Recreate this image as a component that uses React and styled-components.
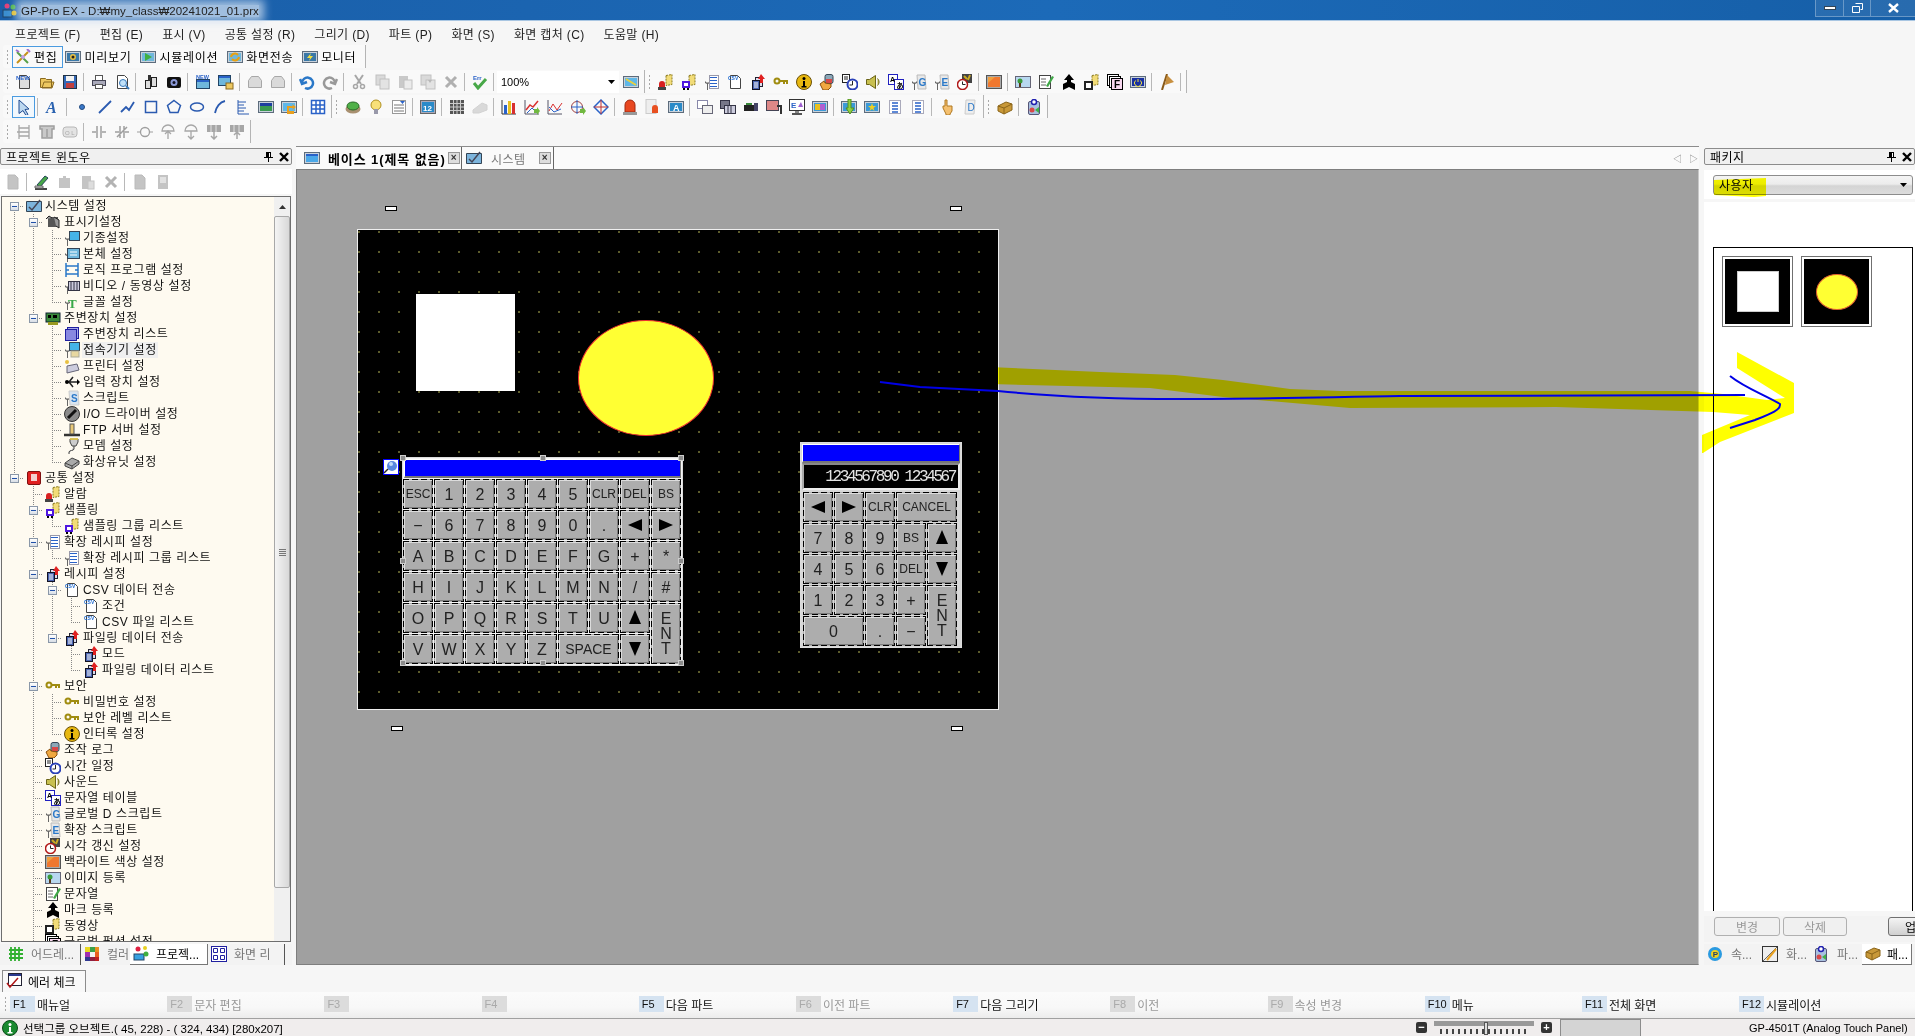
import React from "react";
import styled, { createGlobalStyle, css } from "styled-components";

const KR = `"Liberation Sans", "Noto Sans CJK KR", sans-serif`;

const GlobalStyle = createGlobalStyle`
  html, body { margin: 0; padding: 0; background: #f5f5f5; overflow: hidden; }
  body { font-family: ${KR}; font-size: 12px; color: #000; }
`;

const Page = styled.div`
  position: relative;
  width: 1915px;
  height: 1036px;
  display: flex;
  flex-direction: column;
  overflow: hidden;
  background: #f6f6f6;
`;

/* ---------- icons ---------- */

const Svg = styled.svg`
  width: ${(p) => p.$size || 16}px;
  height: ${(p) => p.$size || 16}px;
  flex: none;
  display: block;
  ${(p) => p.$off && css`filter: grayscale(1) opacity(0.5);`}
`;

const win = (fill, extra) => (
  <>
    <rect x=".5" y="2.5" width="15" height="11" fill="#c9d2dc" stroke="#5d6c7c" />
    <rect x="2" y="4" width="12" height="8" fill={fill} />
    {extra}
  </>
);
const wrench = <path d="M1 7v2l2 1v6h1v-6l2-1V7L4.500 8.500h-2z" fill="#666" />;
const doc = (fill = "#fff") => <path d="M3.500 1.500h7l3 3v10h-10z" fill={fill} stroke="#444" />;
const bld = <path d="M8 1.500l6-1v10l-6 1z" fill="#f2dc78" stroke="#8a7a20" strokeDasharray="2 1" />;
const lines = (
  <g stroke="#2a62c8">
    <path d="M6 3.500h7M6 6.500h7M6 9.500h7M6 12.500h7" />
  </g>
);
const key = (
  <>
    <circle cx="4" cy="7" r="2.500" fill="none" stroke="#a08c10" strokeWidth="2" />
    <path d="M6 7h9M11 7v3M14 7v3" stroke="#a08c10" strokeWidth="2" fill="none" />
  </>
);
const redDocs = (
  <>
    <rect x="5.500" y="3.500" width="7" height="9" fill="#dde" stroke="#223" />
    <rect x="2.500" y="6.500" width="7" height="9" fill="#4a64b0" stroke="#112" />
    <path d="M4 9h4M4 11h4M4 13h4" stroke="#fff" />
    <path d="M11 0l4 5h-2v4h-3V5H8z" fill="#e02020" />
  </>
);
const csv = (
  <>
    {doc()}
    <text x="1" y="6" fontSize="5" fontWeight="700" fill="#1e6ad0" fontFamily="Liberation Sans">CSV</text>
  </>
);
const tri = (d) => <path d={d} fill="#000" />;

const ICONS = {
  logo: <><rect x="1" y="8" width="9" height="7" fill="#3b8ed0" stroke="#246" /><circle cx="5" cy="4" r="2.500" fill="#e0427a" /><circle cx="11" cy="5" r="2.500" fill="#4cb548" /><circle cx="12" cy="11" r="2.500" fill="#e8c020" /></>,
  edit: <><path d="M2 14L13 3" stroke="#c49018" strokeWidth="2" /><path d="M2 3l11 11" stroke="#58a048" strokeWidth="2" /><path d="M1 1l3 2 M12 0l3 3" stroke="#a070d0" strokeWidth="2" /><circle cx="8" cy="8" r="2" fill="#c0a0e8" /></>,
  preview: win("#3a78a8", <><circle cx="8" cy="8" r="3" fill="#e8c040" /><circle cx="8" cy="8" r="1.500" fill="#222" /></>),
  sim: win("#6fb7dc", <path d="M5 4l7 4-7 4z" fill="#40b040" />),
  send: win("#6fb7dc", <path d="M4 8a4 4 0 017-2M12 8a4 4 0 01-7 2" stroke="#e8a010" strokeWidth="2" fill="none" />),
  moni: win("#3a78a8", <path d="M9 4L5 9h3l-1 3 4-5H8z" fill="#f0e040" />),
  new: <>{doc("#ddd")}<text x="0" y="6" fontSize="6" fontWeight="700" fill="#2a62c8" fontFamily="Liberation Sans">NEW</text></>,
  open: <path d="M1.500 4.500h5l1 1h5v8h-11zM3 14l2-6h10l-2 6z" fill="#edc860" stroke="#8a6a20" />,
  save: <><rect x="1.500" y="1.500" width="13" height="13" fill="#3468b8" stroke="#234" /><rect x="4" y="2" width="8" height="5" fill="#f4f4f4" /><rect x="4" y="9" width="8" height="5" fill="#c04040" /></>,
  print: <><rect x="4.500" y="1.500" width="7" height="5" fill="#fff" stroke="#555" /><rect x="1.500" y="6.500" width="13" height="5" fill="#aab" stroke="#445" /><rect x="4.500" y="10.500" width="7" height="4" fill="#fff" stroke="#555" /></>,
  find: <>{doc()}<circle cx="9" cy="9" r="3.500" fill="#bfe0f8" stroke="#3878b8" /><path d="M12 12l3 3" stroke="#3878b8" strokeWidth="2" /></>,
  binoc: <><rect x="2.500" y="6.500" width="5" height="8" fill="#ddd" stroke="#222" /><rect x="8.500" y="3.500" width="5" height="9" fill="#ddd" stroke="#222" /><rect x="5" y="1" width="3" height="6" fill="#333" /></>,
  camera: <><rect x="1" y="3" width="14" height="11" rx="2" fill="#111" /><circle cx="8" cy="8.500" r="3.500" fill="#8c9ad8" /><circle cx="8" cy="8.500" r="1.500" fill="#112" /></>,
  newscr: <><rect x="1.500" y="5.500" width="13" height="9" fill="#6fb7dc" stroke="#246" /><rect x="2" y="6" width="12" height="2" fill="#2a62c8" /><text x="1" y="5" fontSize="5.500" fontWeight="700" fill="#2a62c8" fontFamily="Liberation Sans">NEW</text></>,
  scrcopy: <><rect x=".5" y="1.500" width="12" height="10" fill="#6fb7dc" stroke="#246" /><rect x="1" y="2" width="11" height="2" fill="#2a62c8" /><rect x="8" y="9" width="7" height="6" fill="#edc860" stroke="#8a6a20" /></>,
  scrA: <path d="M1.500 6.500l3-4h7l3 4v7h-13z" fill="#bbb" stroke="#555" />,
  undo: <path d="M3 9a5.500 5.500 0 1 1 3 5M1 5l2 5 5-2" stroke="#2a78c8" strokeWidth="2.500" fill="none" />,
  redo: <path d="M13 9a5.500 5.500 0 1 0-3 5M15 5l-2 5-5-2" stroke="#999" strokeWidth="2.500" fill="none" />,
  cut: <><path d="M4 1l6 9M12 1L6 10" stroke="#555" strokeWidth="2" /><circle cx="4.500" cy="12.500" r="2" fill="none" stroke="#555" strokeWidth="1.500" /><circle cx="11.500" cy="12.500" r="2" fill="none" stroke="#555" strokeWidth="1.500" /></>,
  copy: <><rect x="2" y="1" width="9" height="10" fill="#bbb" stroke="#888" /><rect x="6" y="5" width="9" height="10" fill="#ccc" stroke="#888" /></>,
  paste: <><rect x="2" y="2" width="9" height="12" fill="#999" /><rect x="7" y="6" width="8" height="9" fill="#ddd" stroke="#888" /></>,
  paste2: <><rect x="1" y="1" width="10" height="10" fill="#bbb" stroke="#888" /><rect x="6" y="6" width="9" height="9" fill="#ccc" stroke="#888" /><path d="M8 6h4l-2 3z" fill="#777" /></>,
  del: <path d="M3 3l10 10M13 3L3 13" stroke="#666" strokeWidth="3" />,
  check: <><text x="1" y="5.500" fontSize="6" fontWeight="700" fill="#2a62c8" fontFamily="Liberation Sans">Err</text><path d="M2 9l4 5 8-9" stroke="#48a848" strokeWidth="3" fill="none" /></>,
  tone: win("#5fb7e8", <path d="M3 5l10 6" stroke="#e8d040" strokeWidth="2" />),
  basewin: win("#4aa8e8", <rect x="2" y="4" width="12" height="2" fill="#2a62c8" />),
  alarm: <>{bld}<path d="M1 14v-4a3 3 0 016 0v4z" fill="#d82020" /><rect x="0" y="13" width="8" height="3" fill="#444" /></>,
  samp: <>{bld}<rect x="1" y="7" width="8" height="7" fill="#5018e0" /><rect x="3" y="9" width="4" height="3" fill="#fff" /><rect x="2" y="14" width="2" height="2" /><rect x="6" y="14" width="2" height="2" /></>,
  rlist: <>{wrench}<rect x="5.500" y="1.500" width="9" height="13" fill="#fff" stroke="#99a" />{lines}</>,
  csv,
  docs: redDocs,
  key,
  info: <><circle cx="8" cy="8" r="7.500" fill="#e8b810" stroke="#6a5008" /><circle cx="8" cy="4.500" r="1.500" fill="#000" /><path d="M7 7h2v5h1.500v1.500h-5V12H7z" fill="#000" /></>,
  hand: <><rect x="6" y="0.500" width="8" height="9" rx="2" fill="#8ca8b8" stroke="#345" /><rect x="7" y="5" width="6" height="4" fill="#d84848" /><path d="M1 10l4-3 1 2 6 1v3l-3 3H4z" fill="#f0a840" stroke="#8a5010" /></>,
  clock: <><rect x="0.500" y="0.500" width="7" height="8" fill="#fff" stroke="#222" /><path d="M2 3h4M2 5h4" stroke="#222" /><circle cx="10.500" cy="10.500" r="5" fill="#fff" stroke="#2a40b8" strokeWidth="2" /><path d="M10.500 7v4h-3" stroke="#222" fill="none" /></>,
  sound: <path d="M1.500 5.500h3l6-4v13l-6-4h-3zM12.500 4.500c2 2 2 5 0 7" fill="#c8c050" stroke="#6a6418" />,
  abtable: <><rect x="0.500" y="0.500" width="9" height="10" fill="#fff" stroke="#2020c0" /><rect x="6.500" y="5.500" width="9" height="10" fill="#fff" stroke="#2020c0" /><text x="2" y="8" fontSize="7" fontWeight="700" fontFamily="Liberation Sans">A</text><text x="8.500" y="14" fontSize="7" fontWeight="700" fontFamily="Noto Sans CJK JP">あ</text></>,
  gs: <>{wrench}<path d="M6 1h8l1 14H7z" fill="#e8e8e8" stroke="#bbb" /><text x="7.500" y="12" fontSize="10" fill="#2a78c8" fontWeight="700" fontFamily="Liberation Sans">G</text></>,
  xs: <>{wrench}<path d="M6 1h8l1 14H7z" fill="#e8e8e8" stroke="#bbb" /><text x="7.500" y="12" fontSize="10" fill="#2a78c8" fontWeight="700" fontFamily="Liberation Sans">E</text></>,
  timer: <><rect x="5" y="0" width="10" height="9" fill="#444" /><path d="M7 2l3 3M13 1l-2 5" stroke="#ca2" strokeWidth="2" /><circle cx="5.500" cy="10.500" r="5" fill="#fff" stroke="#b01818" strokeWidth="1.500" /><path d="M5.500 7.500v3h3" stroke="#222" fill="none" /></>,
  back: <><rect x=".5" y="1.500" width="15" height="13" fill="#aaa" stroke="#555" /><rect x="2" y="3" width="12" height="10" fill="#f07830" /><path d="M2 3h7l-7 6z" fill="#f0a040" /></>,
  image: <><rect x=".5" y="2.500" width="15" height="11" fill="#b8d8f0" stroke="#667" /><circle cx="5" cy="7" r="2.500" fill="#3a9a3a" /><rect x="4" y="9" width="2" height="4" fill="#5a3a18" /></>,
  textpen: <><rect x="1.500" y="1.500" width="11" height="13" fill="#fff" stroke="#444" /><path d="M3 5h5M3 8h5M3 11h5" stroke="#666" /><path d="M8 12L14 2l2 1-6 10z" fill="#40a848" /></>,
  mark: <path d="M8 0l5 6h-3v2l4 2v6l-6-3-6 3v-6l4-2V6H3z" fill="#000" />,
  movie: <>{bld}<rect x="0" y="7" width="9" height="9" fill="#222" /><rect x="2" y="9" width="5" height="5" fill="#fff" /></>,
  fdoc: <><rect x=".5" y=".5" width="11" height="11" fill="#fff" stroke="#000" /><rect x="2.500" y="2.500" width="11" height="11" fill="#fff" stroke="#000" /><rect x="4.500" y="4.500" width="11" height="11" fill="#f8d8f0" stroke="#000" /><text x="7" y="14" fontSize="10" fontWeight="700" fontFamily="Liberation Sans">F</text></>,
  power: win("#1830a0", <path d="M8 5v3M5.500 6.500a3.500 3.500 0 105 0" stroke="#f0e040" fill="none" />),
  flag: <><path d="M3 16L8 0" stroke="#8a5a18" strokeWidth="2" /><path d="M8 1l7 7-9 3z" fill="#c89040" /></>,
  pointer: <path d="M3 1l10 9-4 .5 3 5-2 1-3-5-4 3z" fill="#bcd8f0" stroke="#1f4a90" />,
  A: <text x="1" y="14" fontSize="16" fontWeight="700" fontStyle="italic" fontFamily="Liberation Serif" fill="#2a62b0">A</text>,
  dot: <circle cx="8" cy="8" r="2.500" fill="#3a78c8" stroke="#234a80" />,
  line: <path d="M2 14L14 2" stroke="#2a5ab0" strokeWidth="1.800" />,
  poly: <path d="M1 13l5-5 3 3 5-8" stroke="#2a5ab0" strokeWidth="1.800" fill="none" />,
  rect: <rect x="2.500" y="2.500" width="11" height="11" fill="none" stroke="#2a5ab0" strokeWidth="1.500" />,
  penta: <path d="M8 1.500l6.500 5-2.500 7H4l-2.500-7z" fill="none" stroke="#2a5ab0" strokeWidth="1.500" />,
  ellipse: <ellipse cx="8" cy="8" rx="6.500" ry="4" fill="none" stroke="#2a5ab0" strokeWidth="1.500" />,
  arc: <path d="M3 14C4 8 8 3 13 2" fill="none" stroke="#2a5ab0" strokeWidth="1.800" />,
  scale: <path d="M3 1v14h11M3 3h8M3 6h6M3 9h8M3 12h6" fill="none" stroke="#2a5ab0" />,
  img: win("#3a9a50", <rect x="2" y="4" width="12" height="3" fill="#1f3fa0" />),
  img2: win("#5fb7e8", <path d="M15 8l-4 3 1-2H8v3h5v3H6V7h6l-1-2z" fill="#e8a020" />),
  table: <><rect x="1.500" y="1.500" width="13" height="13" fill="#fff" stroke="#2a62c8" strokeWidth="1.500" /><path d="M1.500 6h13M1.500 10h13M6 1.500v13M10 1.500v13" stroke="#2a62c8" strokeWidth="1.500" /></>,
  button: <><ellipse cx="8" cy="10" rx="7.500" ry="4.500" fill="#a89070" /><ellipse cx="8" cy="7" rx="6" ry="4" fill="#50b048" stroke="#2a6a28" /></>,
  bulb: <><circle cx="8" cy="6" r="5" fill="#f8e078" stroke="#b09020" /><rect x="6" y="10" width="4" height="5" fill="#99a" /></>,
  listdoc: <><rect x="1.500" y="1.500" width="13" height="13" fill="#fff" stroke="#999" /><path d="M3 6h10M3 9h10M3 12h10" stroke="#777" /><path d="M9 2h5l-2.500 3z" fill="#2a62c8" /></>,
  num: <><rect x=".5" y="1.500" width="15" height="13" fill="#aab" stroke="#666" /><rect x="2" y="3" width="12" height="10" fill="#2a8ac8" /><text x="3" y="11.500" fontSize="8" fontWeight="700" fill="#fff" fontFamily="Liberation Sans">12</text></>,
  grid: <><rect x="1" y="1" width="14" height="14" fill="#555" /><path d="M4.500 1v14M8 1v14M11.500 1v14M1 4.500h14M1 8h14M1 11.500h14" stroke="#ccc" /></>,
  erase: <path d="M1 11l9-7 5 2v5l-8 3H1z" fill="#c8b8a0" stroke="#aaa" />,
  bars: <><path d="M1 1v14h14" stroke="#333" fill="none" /><rect x="3" y="6" width="3" height="9" fill="#2a62c8" /><rect x="7" y="2" width="3" height="13" fill="#e8c020" /><rect x="11" y="4" width="3" height="11" fill="#d83030" /></>,
  chart1: <><path d="M1 1v14h14" stroke="#556" fill="none" /><path d="M2 11l4-5 3 2 5-6" stroke="#d83030" fill="none" strokeWidth="1.500" /><path d="M3 14l5-5 2 2" stroke="#2a62c8" fill="none" /><path d="M10 10h3V8l3 4-3 4v-2h-3z" fill="#70b840" /></>,
  chart2: <><path d="M1 1v14h14" stroke="#556" fill="none" /><path d="M2 12l4-7 4 6 5-7" stroke="#d83030" fill="none" /><path d="M2 8l5 5 7-3" stroke="#2a62c8" fill="none" /></>,
  polar: <><circle cx="7" cy="8" r="5.500" fill="none" stroke="#a04040" /><path d="M7 1v14M1 8h12" stroke="#2a62c8" /><path d="M10 10h3V8l3 4-3 4v-2h-3z" fill="#70b840" /></>,
  diamond: <><path d="M8 1l7 7-7 7-7-7z" fill="none" stroke="#2a62c8" strokeWidth="1.500" /><path d="M8 1v14M1 8h14" stroke="#c03030" /></>,
  lamp: <><path d="M3 13V6a5 5 0 0110 0v7z" fill="#e84820" stroke="#a02810" /><rect x="1" y="13" width="14" height="3" fill="#999" /></>,
  lamp2: <><rect x="1" y="0.500" width="10" height="14" fill="#eee" stroke="#ccc" /><path d="M7 14V9a3 3 0 016 0v5z" fill="#e85020" /></>,
  boxA: win("#2a8ac8", <text x="5" y="11.500" fontSize="9" fontWeight="700" fill="#fff" fontFamily="Liberation Sans">A</text>),
  stack: <><rect x=".5" y="1.500" width="10" height="8" fill="#fff" stroke="#88a" /><rect x="5.500" y="6.500" width="10" height="8" fill="#eee" stroke="#667" /></>,
  film: <><rect x=".5" y="1.500" width="9" height="8" fill="#778" stroke="#334" /><rect x="4.500" y="6.500" width="11" height="8" fill="#ccd" stroke="#334" /><path d="M8 7v7M11 7v7" stroke="#334" /></>,
  cam2: <><rect x="1" y="6" width="10" height="6" fill="#222" /><rect x="11" y="4" width="4" height="8" fill="#446" /><rect x="3" y="4" width="6" height="2" fill="#3a8a3a" /></>,
  proj: <><rect x=".5" y="1.500" width="12" height="10" fill="#d88" stroke="#445" /><path d="M11 7h4v8" stroke="#333" strokeWidth="2" fill="none" /></>,
  pc: <><rect x=".5" y=".5" width="15" height="11" fill="#fff" stroke="#333" /><text x="2" y="9" fontSize="8" fontWeight="700" fill="#2a62c8" fontFamily="Liberation Sans">E</text><path d="M9 8l3-5 2 5z" fill="#a060d0" /><rect x="6" y="12" width="4" height="2" fill="#888" /><rect x="3" y="14" width="10" height="2" fill="#555" /></>,
  multi: win("#3a9ad8", <><rect x="3" y="5" width="5" height="6" fill="#e8c020" /><rect x="8" y="5" width="5" height="6" fill="#b060d0" /></>),
  down: win("#3a9ad8", <path d="M7 0h3v9h3l-4 6-4-6h2z" fill="#90d040" stroke="#509020" />),
  star: win("#3a9ad8", <path d="M8 4l1 3h3l-2.500 2 1 3L8 10l-2.500 2 1-3L4 7h3z" fill="#f0d020" />),
  listA: <><rect x="2.500" y="1.500" width="11" height="13" fill="#fff" stroke="#aab" /><path d="M5 4h6M5 7h6M5 10h6M5 13h6" stroke="#2a62c8" strokeWidth="1.500" /></>,
  finger: <path d="M6 1h2v6h5v5l-2 3v1H7v-1L4 9V7h2z" fill="#f4c070" stroke="#b07820" />,
  scroll: <><path d="M4 1h9l-1 14H3z" fill="#eee" stroke="#ccc" /><text x="5.500" y="12" fontSize="10" fill="#2a78c8" fontFamily="Liberation Sans">D</text></>,
  pkg: <><path d="M1 7l8-4 6 2v6l-8 4-6-3z" fill="#c89838" stroke="#8a6418" /><path d="M1 7l6 2 8-4M7 9v6" stroke="#8a6418" fill="none" /></>,
  parts: <><rect x="2.500" y="2.500" width="11" height="13" rx="1.500" fill="#a8c0e0" stroke="#557" /><circle cx="8" cy="3" r="2.500" fill="#fff" stroke="#2020b0" strokeWidth="1.500" /><circle cx="6" cy="11" r="2.500" fill="#d84848" /><path d="M9 11l4-3v6z" fill="#40b048" /></>,
  lad: <path d="M3 1v14M13 1v14M3 4h10M3 8h10M3 12h10M1 8h4" stroke="#555" fill="none" strokeWidth="1.300" />,
  tee: <path d="M1 2h14v3h-2v9H3V5H1zM8 5v8" stroke="#444" strokeWidth="1.500" fill="#999" />,
  oval: <><rect x="1" y="3" width="14" height="10" rx="3" fill="#ccc" stroke="#777" /><text x="3" y="10.500" fontSize="6" fill="#555" fontFamily="Liberation Sans">O L</text></>,
  nc: <path d="M1 8h4M11 8h4M6 2v12M10 2v12" stroke="#444" strokeWidth="1.500" />,
  no: <path d="M1 8h4M11 8h4M6 2v12M10 2v12M3 13l10-10" stroke="#444" strokeWidth="1.500" />,
  circ: <><circle cx="8" cy="8" r="4.500" fill="none" stroke="#444" strokeWidth="1.300" /><path d="M0 8h3M13 8h3" stroke="#444" /></>,
  upg: <><path d="M2 7a6 6 0 0112 0z" fill="none" stroke="#555" strokeWidth="1.300" /><path d="M8 7v8M5 10l3-3 3 3" stroke="#555" strokeWidth="1.300" fill="none" /></>,
  dng: <><path d="M2 7a6 6 0 0112 0z" fill="none" stroke="#555" strokeWidth="1.300" /><path d="M8 7v8M5 12l3 3 3-3" stroke="#555" strokeWidth="1.300" fill="none" /></>,
  regd: <><rect x="1" y="1" width="14" height="7" fill="#555" /><path d="M5 1v7M10 1v7" stroke="#ccc" /><path d="M8 8v7M5 12l3 3 3-3" stroke="#555" strokeWidth="1.500" fill="none" /></>,
  regu: <><rect x="1" y="1" width="14" height="7" fill="#555" /><path d="M5 1v7M10 1v7" stroke="#ccc" /><path d="M8 8v7M5 11l3-3 3 3" stroke="#555" strokeWidth="1.500" fill="none" /></>,
  sys: <><path d="M.5 3.500h15v10H.5z" fill="#7cb4dc" stroke="#345" /><path d="M3 9l3 3 8-10" stroke="#445" strokeWidth="1.500" fill="none" /></>,
  dispset: <><rect x="3" y="3" width="10" height="10" fill="#555" /><path d="M1 5l3-3 3 2M9 3l5 3v8l-3-2" stroke="#222" fill="#999" /></>,
  wmodel: <>{wrench}<rect x="5.500" y="1.500" width="10" height="9" fill="#45b4e8" stroke="#345" /></>,
  wbody: <>{wrench}<rect x="3.500" y="2.500" width="12" height="10" fill="#6fb7dc" stroke="#345" /><path d="M6 6h7M6 9h7" stroke="#fff" /></>,
  logic: <path d="M2 1v14M14 1v14M2 4h12M2 8h3M11 8h3M2 12h12" stroke="#2a78c8" strokeWidth="1.500" fill="none" />,
  wvideo: <>{wrench}<rect x="4.500" y="3.500" width="11" height="9" fill="#ccd" stroke="#334" /><path d="M7 4v8M10 4v8M13 4v8" stroke="#334" /></>,
  wfont: <>{wrench}<text x="4" y="14" fontSize="13" fontWeight="700" fontFamily="Liberation Serif" fill="#38a848">T</text></>,
  periph: <><rect x="1" y="3" width="14" height="9" fill="#3a8a3a" stroke="#123" /><path d="M3 5h3v3H3zM8 5h4v3H8z" fill="#000" /><rect x="3" y="12" width="10" height="3" fill="#9a9a20" /></>,
  plist: <><rect x="3.500" y="1.500" width="11" height="11" fill="#a8a8e8" stroke="#2020a0" /><rect x="1.500" y="3.500" width="11" height="11" fill="#8888e0" stroke="#2020a0" /></>,
  wconn: <>{wrench}<rect x="5.500" y="0.500" width="10" height="8" fill="#45b4e8" stroke="#345" /><rect x="7" y="9" width="8" height="6" fill="#e8d8a0" stroke="#aa9" /></>,
  printer2: <><circle cx="3" cy="4" r="2" fill="#e8c040" /><path d="M3 8l10-2 2 6-12 3z" fill="#ccd" stroke="#667" /></>,
  usb: <><path d="M2 8h11M9 3l-4 5 4 5" stroke="#222" strokeWidth="1.500" fill="none" /><circle cx="3" cy="8" r="2" /><path d="M13 5l3 3-3 3z" /></>,
  wscript: <>{wrench}<path d="M5 1h9l1 14H6z" fill="#d8e4f0" stroke="#ccc" /><text x="7" y="12" fontSize="10" fontWeight="700" fill="#2a78c8" fontFamily="Liberation Sans">S</text></>,
  screw: <><circle cx="8" cy="8" r="7.500" fill="#8a8a8a" stroke="#333" /><path d="M4 12l8-8" stroke="#111" strokeWidth="3" /></>,
  ftp: <><path d="M0 13h16" stroke="#333" strokeWidth="2.500" /><rect x="6" y="2" width="4" height="10" fill="#e8c878" stroke="#555" /></>,
  modem: <><path d="M6 1h8v3l-2 4H8L6 4zM10 8v3c0 2-5 1-5 3v2" fill="#ccc" stroke="#444" /><path d="M6 1h8" stroke="#f0d040" strokeWidth="1.500" /></>,
  hdd: <><path d="M1 9l7-5 7 3v3l-7 5-7-3z" fill="#aaa" stroke="#444" /><path d="M1 9l7 3 7-5M8 12v3" stroke="#444" fill="none" /></>,
  common: <><rect x="1.500" y="1.500" width="13" height="13" rx="1.500" fill="#e02020" stroke="#801010" /><rect x="5" y="4" width="6" height="7" fill="#f4d0d0" /></>,
  addr: <path d="M3 1v14M7 1v14M11 1v14M1 4h14M1 8h14M1 12h14" stroke="#30b030" strokeWidth="1.800" />,
  color: <><rect x="1" y="1" width="5" height="5" fill="#e8d820" /><rect x="6" y="1" width="5" height="5" fill="#3aa048" /><rect x="11" y="1" width="4" height="5" fill="#e89020" /><rect x="1" y="6" width="5" height="5" fill="#a030b0" /><rect x="11" y="6" width="4" height="5" fill="#e86020" /><rect x="1" y="11" width="5" height="4" fill="#303890" /><rect x="6" y="11" width="5" height="4" fill="#902040" /><rect x="11" y="11" width="4" height="4" fill="#c02020" /></>,
  project: <><rect x="1" y="9" width="10" height="6" fill="#38a0e0" stroke="#246" /><circle cx="5" cy="4" r="2.500" fill="#e02040" /><circle cx="12" cy="3" r="2" fill="#e8d020" /><circle cx="13" cy="9" r="2.500" fill="#40b040" /></>,
  scrlist: <><rect x=".5" y=".5" width="15" height="15" fill="#fff" stroke="#2020a0" /><path d="M2.500 2.500h4v4h-4zM9.500 2.500h4v4h-4zM2.500 9.500h4v4h-4zM9.500 9.500h4v4h-4z" fill="none" stroke="#2020a0" /></>,
  errchk: <><rect x="2.500" y=".5" width="13" height="12" fill="#fff" stroke="#223" /><rect x="3" y="1" width="12" height="2" fill="#2a3a90" /><path d="M1 10l3 4 8-9" stroke="#b01818" strokeWidth="1.500" fill="none" /></>,
  prop: <><circle cx="8" cy="8" r="7" fill="#2a9ae0" /><circle cx="8" cy="8" r="4" fill="#f0d020" /><text x="5.800" y="11" fontSize="8" fontWeight="700" fill="#246" fontFamily="Liberation Sans">P</text></>,
  screen: <><rect x=".5" y=".5" width="15" height="15" fill="#eee" stroke="#333" /><path d="M1 15L15 1" stroke="#666" /><path d="M5 14L14 3" stroke="#e8a020" strokeWidth="2" /></>,
  pen: <><path d="M3 11L11 2l3 2-8 9z" fill="#48a848" stroke="#245" /><path d="M1 15h12" stroke="#444" strokeWidth="2" /><path d="M1 12h8v2H1z" fill="#ccc" stroke="#666" /></>,
  puzzle: <path d="M2 4h4V2h3v2h4v10H2z" fill="#888" />,
  clip: <><rect x="2" y="2" width="9" height="13" fill="#888" /><rect x="8" y="7" width="6" height="8" fill="#bbb" stroke="#888" /></>,
  page: <path d="M3 1h7l3 3v11H3z" fill="#888" stroke="#777" />,
  pagel: <><rect x="3" y="1" width="10" height="14" fill="#888" /><path d="M5 4h6M5 6h6M5 8h6" stroke="#fff" /></>,
  okinfo: <><circle cx="8" cy="8" r="7.500" fill="#1a8a30" stroke="#0a4a18" /><circle cx="8" cy="4.500" r="1.500" fill="#fff" /><path d="M7 7h2v5h1.500v1.500h-5V12H7z" fill="#fff" /></>,
  mag: <><rect x=".5" y=".5" width="15" height="15" fill="#fff" stroke="#0000ff" /><circle cx="9" cy="7" r="5" fill="#5a88e0" /><circle cx="8" cy="5" r="2" fill="#c0d8f8" /><path d="M5 10l-4 4" stroke="#222" strokeWidth="1.500" /></>,
};

const Icon = ({ name, off, size }) => (
  <Svg viewBox="0 0 16 16" $off={off} $size={size}>
    {ICONS[name]}
  </Svg>
);

/* ---------- title + menu ---------- */

const TitleBar = styled.div`
  height: 20px;
  flex: none;
  display: flex;
  align-items: center;
  padding-left: 2px;
  border-bottom: 1px solid #a9c6e2;
  background: linear-gradient(90deg, #1a5ea8 0%, #1c6ab8 55%, #165fa8 100%);
`;

const TitleText = styled.span`
  margin-left: 3px;
  margin-top: 2px;
  font-size: 11.500px;
  color: #222;
  background: rgba(205, 222, 240, 0.75);
  box-shadow: 0 0 8px 5px rgba(205, 222, 240, 0.75);
`;

const WindowButtons = styled.div`
  margin-left: auto;
  display: flex;
  height: 17px;
  align-self: flex-start;
`;

const WindowButton = styled.div`
  width: ${(p) => p.$w}px;
  display: flex;
  justify-content: center;
  align-items: center;
  box-sizing: border-box;
  border-left: 1px solid rgba(255, 255, 255, 0.3);
  border-bottom: 1px solid rgba(255, 255, 255, 0.3);
  background: rgba(255, 255, 255, 0.08);
`;

const MenuBar = styled.div`
  height: 24px;
  flex: none;
  display: flex;
  align-items: center;
  gap: 19px;
  padding-left: 15px;
  font-size: 12px;
  letter-spacing: 0.35px;
  color: #222;
`;

const MENU = ["프로젝트 (F)", "편집 (E)", "표시 (V)", "공통 설정 (R)", "그리기 (D)", "파트 (P)", "화면 (S)", "화면 캡처 (C)", "도움말 (H)"];

/* ---------- toolbars ---------- */

const ToolArea = styled.div`
  flex: none;
  height: 101px;
  display: flex;
  flex-direction: column;
  gap: 2px;
  padding-left: 3px;
`;

const ToolRow = styled.div`
  height: 23px;
  display: flex;
`;

const ToolGroup = styled.div`
  height: 23px;
  display: flex;
  align-items: center;
  padding-left: 2px;
  padding-right: 2px;
  background: #f9f9f9;
  border-right: 1px solid #b4b4b4;
  border-radius: 3px 0 0 3px;
`;

const Grip = styled.div`
  width: 3px;
  height: 16px;
  margin: 0 3px 0 1px;
  flex: none;
  background: radial-gradient(circle, #a8a8a8 1px, transparent 1px) 0 0 / 3px 4px;
`;

const ToolBtn = styled.div`
  width: 23px;
  height: 22px;
  flex: none;
  display: flex;
  align-items: center;
  justify-content: center;
  box-sizing: border-box;
  ${(p) => p.$on && css`border: 1px solid #4a9be0; background: #f2f8fd;`}
`;

const Sep = styled.div`
  width: 1px;
  height: 18px;
  margin: 0 3px 0 2px;
  flex: none;
  background: #b8b8b8;
`;

const ModeBtn = styled.div`
  height: 22px;
  flex: none;
  display: flex;
  align-items: center;
  gap: 3px;
  box-sizing: border-box;
  padding: 0 ${(p) => (p.$on ? 5 : 2)}px 0 2px;
  margin-right: ${(p) => p.$mr}px;
  font-size: 12px;
  letter-spacing: 0.7px;
  ${(p) => p.$on && css`border: 1px solid #4a9be0;`}
`;

const ZoomCombo = styled.div`
  width: 122px;
  height: 22px;
  flex: none;
  display: flex;
  align-items: center;
  justify-content: space-between;
  box-sizing: border-box;
  padding: 0 4px;
  background: #fff;
  font-size: 11px;
`;

const tinyArrow = <svg width="7" height="4" viewBox="0 0 7 4"><path d="M0 0h7L3.500 4z" /></svg>;

function renderTools(list) {
  return list.map((t, i) => {
    if (t === "|") return <Sep key={i} />;
    const on = t[0] === "*";
    const off = t[0] === "~";
    const name = on || off ? t.slice(1) : t;
    return (
      <ToolBtn key={i} $on={on}>
        <Icon name={name} off={off} />
      </ToolBtn>
    );
  });
}

const MODES = [
  { icon: "edit", label: "편집", on: true, mr: 0 },
  { icon: "preview", label: "미리보기", mr: 5 },
  { icon: "sim", label: "시뮬레이션", mr: 5 },
  { icon: "send", label: "화면전송", mr: 5 },
  { icon: "moni", label: "모니터", mr: 5 },
];

const ROW2A = ["new", "open", "save", "|", "print", "find", "|", "binoc", "camera", "|", "newscr", "scrcopy", "|", "~scrA", "~scrA", "|", "undo", "redo", "|", "~cut", "~copy", "~paste", "~paste2", "~del", "|", "check", "|"];
const ROW2B = ["alarm", "samp", "rlist", "csv", "docs", "key", "info", "hand", "clock", "sound", "abtable", "gs", "xs", "timer", "|", "back", "|", "image", "textpen", "mark", "movie", "fdoc", "power", "|", "flag", "|"];
const ROW3A = ["*pointer", "|", "A", "|", "dot", "line", "poly", "rect", "penta", "ellipse", "arc", "scale", "img", "img2", "|", "table"];
const ROW3B = ["button", "bulb", "listdoc", "|", "num", "|", "grid", "~erase", "|", "bars", "chart1", "chart2", "polar", "diamond", "|", "lamp", "lamp2", "boxA", "|", "stack", "film", "cam2", "proj", "pc", "multi", "|", "down", "star", "listA", "listA", "|", "finger", "scroll"];
const ROW3C = ["pkg", "|", "parts"];
const ROW4 = ["~lad", "~tee", "~oval", "|", "~nc", "~no", "~circ", "~upg", "~dng", "~regd", "~regu"];

/* ---------- workspace ---------- */

const Workspace = styled.div`
  flex: 1;
  display: grid;
  grid-template-columns: 292px 1fr 211px;
  min-height: 0;
`;

const SidePanel = styled.div`
  display: flex;
  flex-direction: column;
  min-height: 0;
  padding-top: 2px;
`;

const PanelTitle = styled.div`
  height: 17px;
  flex: none;
  display: flex;
  align-items: center;
  justify-content: space-between;
  box-sizing: border-box;
  padding: 0 2px 0 5px;
  border: 1px solid #8c8c8c;
  border-radius: 2px;
  background: #f0f0f0;
  font-size: 12px;
  letter-spacing: 0.5px;
`;

const PanelActions = styled.div`
  display: flex;
  align-items: center;
  gap: 6px;
`;

const SideTools = styled.div`
  height: 25px;
  margin-top: 4px;
  flex: none;
  display: flex;
  align-items: center;
  background: #fff;
  padding-left: 1px;
`;

const TreeBox = styled.div`
  flex: 1;
  display: flex;
  min-height: 0;
  margin: 2px 1px 0 1px;
  border: 1px solid #6e6e6e;
  background: #fefaf0;
  overflow: hidden;
`;

const TreeList = styled.div`
  flex: 1;
  padding: 1px 0 0 3px;
  min-width: 0;
  overflow: hidden;
`;

const Row = styled.div`
  height: 16px;
  display: flex;
  align-items: center;
`;

const Elbow = styled.div`
  position: relative;
  width: 19px;
  height: 16px;
  flex: none;
  background-image:
    ${(p) => (p.$up ? `repeating-linear-gradient(#888 0 1px, transparent 1px 2px)` : `none`)},
    ${(p) => (p.$down ? `repeating-linear-gradient(#888 0 1px, transparent 1px 2px)` : `none`)},
    repeating-linear-gradient(90deg, #888 0 1px, transparent 1px 2px);
  background-size: 1px 8px, 1px 8px, 10px 1px;
  background-position: 9px 0, 9px 8px, 9px 8px;
  background-repeat: no-repeat;
`;

const Expander = styled.div`
  position: absolute;
  left: 5px;
  top: 4px;
  width: 9px;
  height: 9px;
  box-sizing: border-box;
  border: 1px solid #8a97a8;
  background: linear-gradient(#fff, #d8dee6);
  &::after {
    content: "";
    position: absolute;
    left: 1px;
    top: 3px;
    width: 5px;
    height: 1px;
    background: #2050a8;
  }
`;

const TreeIcon = styled.div`
  margin-left: 2px;
  flex: none;
`;

const TreeText = styled.div`
  margin-left: 2px;
  padding: 0 1px;
  font-size: 12px;
  letter-spacing: 0.6px;
  line-height: 16px;
  white-space: nowrap;
  color: #111;
  ${(p) => p.$hover && `background: #f0f0f0;`}
`;

const TREE = [
  [0, "sys", "시스템 설정", 1], [1, "dispset", "표시기설정", 1], [2, "wmodel", "기종설정"], [2, "wbody", "본체 설정"],
  [2, "logic", "로직 프로그램 설정"], [2, "wvideo", "비디오 / 동영상 설정"], [2, "wfont", "글꼴 설정"],
  [1, "periph", "주변장치 설정", 1], [2, "plist", "주변장치 리스트"], [2, "wconn", "접속기기 설정", 0, 1], [2, "printer2", "프린터 설정"],
  [2, "usb", "입력 장치 설정"], [2, "wscript", "스크립트"], [2, "screw", "I/O 드라이버 설정"], [2, "ftp", "FTP 서버 설정"],
  [2, "modem", "모뎀 설정"], [2, "hdd", "화상유닛 설정"],
  [0, "common", "공통 설정", 1], [1, "alarm", "알람"], [1, "samp", "샘플링", 1], [2, "samp", "샘플링 그룹 리스트"],
  [1, "rlist", "확장 레시피 설정", 1], [2, "rlist", "확장 레시피 그룹 리스트"], [1, "docs", "레시피 설정", 1],
  [2, "csv", "CSV 데이터 전송", 1], [3, "csv", "조건"], [3, "csv", "CSV 파일 리스트"],
  [2, "docs", "파일링 데이터 전송", 1], [3, "docs", "모드"], [3, "docs", "파일링 데이터 리스트"],
  [1, "key", "보안", 1], [2, "key", "비밀번호 설정"], [2, "key", "보안 레벨 리스트"], [2, "info", "인터록 설정"],
  [1, "hand", "조작 로그"], [1, "clock", "시간 일정"], [1, "sound", "사운드"], [1, "abtable", "문자열 테이블"],
  [1, "gs", "글로벌 D 스크립트"], [1, "xs", "확장 스크립트"], [1, "timer", "시각 갱신 설정"], [1, "back", "백라이트 색상 설정"],
  [1, "image", "이미지 등록"], [1, "textpen", "문자열"], [1, "mark", "마크 등록"], [1, "movie", "동영상"], [1, "fdoc", "글로벌 펑션 설정"],
];

// a guide line continues at level l while a later sibling at that level follows
const continues = (i, l) => {
  for (let j = i + 1; j < TREE.length; j++) {
    if (TREE[j][0] < l) return false;
    if (TREE[j][0] === l) return true;
  }
  return l === 1;
};

const GuideLine = styled.div`
  width: 19px;
  height: 16px;
  flex: none;
  ${(p) => p.$on && `background: repeating-linear-gradient(#888 0 1px, transparent 1px 2px) 9px 0 / 1px 16px no-repeat;`}
`;

function Tree() {
  return (
    <TreeList>
      {TREE.map(([level, icon, label, open, hover], i) => (
        <Row key={i}>
          {Array.from({ length: level }, (_, l) => (
            <GuideLine key={l} $on={continues(i, l)} />
          ))}
          <Elbow $up={i > 0} $down={continues(i, level)}>
            {open ? <Expander /> : null}
          </Elbow>
          <TreeIcon><Icon name={icon} /></TreeIcon>
          <TreeText $hover={hover}>{label}</TreeText>
        </Row>
      ))}
    </TreeList>
  );
}

const Scrollbar = styled.div`
  width: 16px;
  flex: none;
  display: flex;
  flex-direction: column;
  align-items: stretch;
  background: #f0f0f0;
`;

const ScrollArrow = styled.div`
  height: 19px;
  flex: none;
  display: flex;
  align-items: center;
  justify-content: center;
`;

const ScrollThumb = styled.div`
  flex: 1;
  margin-bottom: 53px;
  display: flex;
  align-items: center;
  justify-content: center;
  border: 1px solid #a8a8a8;
  border-radius: 2px;
  background: linear-gradient(90deg, #f4f4f4, #d8d8d8);
`;

const ThumbGrip = styled.div`
  width: 7px;
  height: 7px;
  background: repeating-linear-gradient(#777 0 1px, transparent 1px 2px);
`;

const DockTabs = styled.div`
  height: 21px;
  flex: none;
  margin-top: 2px;
  display: flex;
  align-items: center;
  overflow: hidden;
  padding-left: ${(p) => p.$pl || 0}px;
  background: #f3f3f3;
`;

const DockTab = styled.div`
  width: ${(p) => p.$w}px;
  height: 21px;
  flex: none;
  display: flex;
  align-items: center;
  gap: ${(p) => p.$gap || 7}px;
  box-sizing: border-box;
  padding: 0 0 2px 3px;
  font-size: 12px;
  white-space: nowrap;
  color: ${(p) => (p.$on ? "#000" : "#777")};
  ${(p) => p.$on && `background: #fff; border-bottom: 1px solid #777; border-right: 1px solid #777;`}
  ${(p) => p.$sep && `border-right: 1px solid #555;`}
`;

/* ---------- centre ---------- */

const Centre = styled.div`
  display: flex;
  flex-direction: column;
  min-height: 0;
  margin-left: 4px;
  border-top: 1px solid #8c8c8c;
  margin-right: 5px;
`;

const TabStrip = styled.div`
  height: 22px;
  flex: none;
  display: flex;
  align-items: center;
  padding-left: 8px;
  background: #fafafa;
`;

const DocTab = styled.div`
  display: flex;
  align-items: center;
  height: 22px;
  font-size: ${(p) => (p.$on ? 13 : 12)}px;
  width: ${(p) => p.$w}px;
  flex: none;
  border-right: 1px solid #666;
  box-sizing: border-box;
  padding-left: ${(p) => p.$pl || 0}px;
  color: ${(p) => (p.$on ? "#000" : "#777")};
  font-weight: ${(p) => (p.$on ? 700 : 400)};
  letter-spacing: ${(p) => (p.$on ? 0.9 : 0.5)}px;
`;

const DocTabLabel = styled.span`
  margin-left: ${(p) => p.$ml}px;
  width: ${(p) => p.$w}px;
  flex: none;
  white-space: nowrap;
`;

const CloseBox = styled.div`
  width: 10px;
  height: 10px;
  flex: none;
  display: flex;
  align-items: center;
  justify-content: center;
  border: 1px solid #999;
  background: #ddd;
  font-size: 10px;
  line-height: 1;
  color: #333;
  font-weight: 700;
`;

const TabArrows = styled.div`
  margin-left: auto;
  display: flex;
  gap: 7px;
  padding-right: 1px;
  color: #888;
  font-size: 9px;
`;

const Canvas = styled.div`
  position: relative;
  flex: 1;
  min-height: 0;
  background: #a0a0a0;
  border: 1px solid #7e7e7e;
  border-right-color: #c8c8c8;
`;

const Screen = styled.div`
  position: absolute;
  left: 61px;
  top: 60px;
  width: 640px;
  height: 479px;
  background: #000 radial-gradient(circle at 1px 1px, #5c5c2c 0.8px, transparent 1px) 0 1px / 20px 20px;
  outline: 1px solid #eee;
`;

const SizeHandle = styled.div`
  position: absolute;
  left: ${(p) => p.$x}px;
  top: ${(p) => p.$y}px;
  width: 12px;
  height: 5px;
  box-sizing: border-box;
  background: #fff;
  border: 1px solid #000;
`;

const WhiteBox = styled.div`
  position: absolute;
  left: 58px;
  top: 64px;
  width: 99px;
  height: 97px;
  background: #fff;
`;

const YellowCircle = styled.div`
  position: absolute;
  left: 220px;
  top: 90px;
  width: 136px;
  height: 116px;
  box-sizing: border-box;
  border-radius: 50%;
  background: #ffff33;
  border: 1px solid #f03030;
`;

const Keypad = styled.div`
  position: absolute;
  left: ${(p) => p.$x}px;
  top: ${(p) => p.$y}px;
  width: ${(p) => p.$w}px;
  box-sizing: border-box;
  padding: 1px 0;
  display: flex;
  flex-direction: column;
  background: ${(p) => p.$bg};
  outline: 1px solid #ddd;
`;

const BlueBar = styled.div`
  height: 16px;
  flex: none;
  margin: 0 1px;
  background: #0000ff;
  border: 1px solid #fff;
  border-right-color: #777;
  border-bottom: 2px solid #777;
`;

const KeyGrid = styled.div`
  display: grid;
  grid-template-columns: repeat(${(p) => p.$cols}, 30px);
  grid-auto-rows: 30px;
  gap: 1px;
  padding: ${(p) => p.$pad};
`;

const Key = styled.div`
  position: relative;
  grid-column: span ${(p) => p.$cols || 1};
  grid-row: span ${(p) => p.$rows || 1};
  display: flex;
  align-items: center;
  justify-content: center;
  text-align: center;
  box-sizing: border-box;
  background:
    repeating-linear-gradient(90deg, #000 0 6px, transparent 6px 9px) top / 100% 1px no-repeat,
    repeating-linear-gradient(90deg, #000 0 6px, transparent 6px 9px) bottom / 100% 1px no-repeat,
    repeating-linear-gradient(#000 0 6px, transparent 6px 9px) left / 1px 100% no-repeat,
    repeating-linear-gradient(#000 0 6px, transparent 6px 9px) right / 1px 100% no-repeat,
    #adadad;
  color: #222;
  font-family: "Liberation Sans", sans-serif;
  font-size: ${(p) => p.$size || 16}px;
  line-height: 15px;
  &::before {
    content: "";
    position: absolute;
    inset: 1px;
    box-shadow: inset 1px 1px 0 #dcdcdc, inset -1px -1px 0 #7c7c7c;
  }
`;

const Display = styled.div`
  height: 27px;
  margin: 0 1px 2px;
  box-sizing: border-box;
  display: flex;
  align-items: center;
  justify-content: flex-end;
  padding-right: 3px;
  overflow: hidden;
  background: #000;
  border: 2px solid #aaa;
  border-top-color: #888;
  border-right-color: #eee;
  border-bottom-color: #eee;
  color: #e4e4e4;
  font-family: "Liberation Mono", monospace;
  font-size: 16px;
  letter-spacing: -2.4px;
  white-space: nowrap;
`;

const Grabber = styled.div`
  position: absolute;
  left: ${(p) => p.$x}px;
  top: ${(p) => p.$y}px;
  width: 6px;
  height: 6px;
  background: #8c8c8c;
  border: 1px solid #ccc;
  box-sizing: border-box;
`;

const MagBadge = styled.div`
  position: absolute;
  left: -20px;
  top: 1px;
`;

const ARROWS = {
  l: "M15 2v12L1 8z",
  r: "M1 2v12l14-6z",
  u: "M2 14h12L8 0z",
  d: "M2 1h12L8 15z",
};

const keyOf = (k, i) => (
  <Key key={i} $size={k.s} $cols={k.c} $rows={k.r}>
    {k.a ? <Svg viewBox="0 0 16 16">{tri(ARROWS[k.a])}</Svg> : k.t}
  </Key>
);

const chars = (s) => s.split("").map((t) => ({ t }));
const sm = (t) => ({ t, s: 12 });
const ENT = { t: <>E<br />N<br />T</>, r: 2 };

const KEYS_A = [
  sm("ESC"), ...chars("12345"), sm("CLR"), sm("DEL"), sm("BS"),
  ...chars("−67890."), { a: "l" }, { a: "r" },
  ...chars("ABCDEFG+*"),
  ...chars("HIJKLMN/#"),
  ...chars("OPQRSTU"), { a: "u" }, ENT,
  ...chars("VWXYZ"), { t: "SPACE", c: 2, s: 14 }, { a: "d" },
];

const KEYS_B = [
  { a: "l" }, { a: "r" }, sm("CLR"), { t: "CANCEL", c: 2, s: 12 },
  ...chars("789"), sm("BS"), { a: "u" },
  ...chars("456"), sm("DEL"), { a: "d" },
  ...chars("123+"), ENT,
  { t: "0", c: 2 }, { t: "." }, { t: "−" },
];

const GRABS = [[-3, -3], [137, -3], [275, -3], [-3, 100], [275, 100], [-3, 202], [137, 202], [275, 202]];

/* ---------- right panel ---------- */

const DropRow = styled.div`
  height: 29px;
  margin-top: 5px;
  flex: none;
  display: flex;
  align-items: center;
  padding: 0 2px 0 9px;
  background: #fff;
`;

const Dropdown = styled.div`
  flex: 1;
  height: 20px;
  display: flex;
  align-items: center;
  justify-content: space-between;
  padding: 0 5px 0 5px;
  box-sizing: border-box;
  border: 1px solid #8c8c8c;
  border-radius: 3px;
  background: linear-gradient(#f4f4f4 0%, #ececec 45%, #d4d4d4 55%, #dcdcdc 100%);
  font-size: 12px;
  letter-spacing: 0.5px;
`;

const ListWrap = styled.div`
  flex: 1;
  min-height: 0;
  margin-top: 3px;
  padding: 45px 2px 0 9px;
  background: #fff;
  display: flex;
`;

const ListBox = styled.div`
  flex: 1;
  display: flex;
  align-items: flex-start;
  gap: 8px;
  padding: 8px 8px;
  border: 1px solid #000;
  border-bottom: 0;
  background: #fff;
`;

const Thumb = styled.div`
  width: 71px;
  height: 71px;
  flex: none;
  box-sizing: border-box;
  padding: 2px;
  border: 1px solid #707070;
  background: #fff;
`;

const ThumbInner = styled.div`
  width: 100%;
  height: 100%;
  background: #000;
  display: flex;
  align-items: center;
  justify-content: center;
`;

const ThumbSquare = styled.div`
  width: 42px;
  height: 41px;
  background: #fff;
  box-sizing: border-box;
  border: 1px solid #ccc;
`;

const ThumbCircle = styled.div`
  width: 42px;
  height: 36px;
  border-radius: 50%;
  background: #ffff33;
  box-sizing: border-box;
  border: 1px solid #e06030;
`;

const ButtonRow = styled.div`
  height: 26px;
  flex: none;
  display: flex;
  align-items: flex-start;
  gap: 3px;
  padding: 1px 0 0 10px;
  box-sizing: border-box;
  margin-top: 5px;
  overflow: hidden;
  background: #f3f3f3;
`;

const PanelButton = styled.div`
  width: ${(p) => p.$w}px;
  height: 19px;
  flex: none;
  margin-left: ${(p) => p.$ml || 0}px;
  display: flex;
  align-items: center;
  justify-content: ${(p) => (p.$clip ? "flex-start" : "center")};
  padding-left: ${(p) => (p.$clip ? 16 : 0)}px;
  box-sizing: border-box;
  border: 1px solid ${(p) => (p.$clip ? "#707070" : "#b0b0b0")};
  border-radius: 3px;
  font-size: 12px;
  color: ${(p) => (p.$clip ? "#000" : "#999")};
  background: ${(p) => (p.$clip ? "linear-gradient(#f4f4f4, #d0d0d0)" : "#f0f0f0")};
`;

/* ---------- bottom ---------- */

const ErrorStrip = styled.div`
  height: 27px;
  flex: none;
  display: flex;
  align-items: flex-end;
  padding-left: 2px;
  background: #f6f6f6;
`;

const ErrorTab = styled.div`
  width: 84px;
  height: 22px;
  display: flex;
  align-items: center;
  gap: 6px;
  box-sizing: border-box;
  padding: 0 0 1px 3px;
  border: 1px solid #8c8c8c;
  border-bottom: 0;
  background: #f8f8f8;
  font-size: 12px;
`;

const FunctionBar = styled.div`
  height: 26px;
  flex: none;
  display: flex;
  align-items: center;
  padding: 0 0 2px 3px;
  box-sizing: border-box;
  background: linear-gradient(#fbfbfb, #f8f8f8 60%, #ececec);
`;

const FnItem = styled.div`
  width: 157.200px;
  flex: none;
  display: flex;
  align-items: center;
  gap: 2px;
  font-size: 12px;
  white-space: nowrap;
  color: ${(p) => (p.$off ? "#999" : "#111")};
`;

const FnKey = styled.div`
  width: 25px;
  height: 16px;
  flex: none;
  display: flex;
  align-items: center;
  padding-left: 3px;
  box-sizing: border-box;
  font-size: 11px;
  background: ${(p) => (p.$off ? "#dcdcdc" : "#d5e3f1")};
  color: ${(p) => (p.$off ? "#aaa" : "#111")};
`;

const FKEYS = [
  ["F1", "매뉴얼"], ["F2", "문자 편집", 1], ["F3", "", 1], ["F4", "", 1], ["F5", "다음 파트"], ["F6", "이전 파트", 1],
  ["F7", "다음 그리기"], ["F8", "이전", 1], ["F9", "속성 변경", 1], ["F10", "메뉴"], ["F11", "전체 화면"], ["F12", "시뮬레이션"],
];

const StatusBar = styled.div`
  height: 18px;
  flex: none;
  display: flex;
  align-items: center;
  border-top: 1px solid #a0a0a0;
  box-sizing: border-box;
  padding-left: 2px;
  background: #f0eded;
  font-size: 12px;
  white-space: nowrap;
`;

const StatusText = styled.span`
  margin-left: 5px;
  width: 1393px;
  flex: none;
  font-size: 11.500px;
`;

const PanelModel = styled.span`
  flex: none;
  font-size: 11px;
`;

const Slider = styled.div`
  display: flex;
  align-items: center;
  gap: 7px;
  width: 144px;
  flex: none;
`;

const ZoomBtn = styled.div`
  width: 11px;
  height: 11px;
  flex: none;
  border-radius: 2px;
  background: #333;
  color: #fff;
  display: flex;
  align-items: center;
  justify-content: center;
  font-size: 11px;
  line-height: 1;
  font-weight: 700;
`;

const SliderTrack = styled.div`
  position: relative;
  width: 100px;
  height: 15px;
  flex: none;
  background:
    linear-gradient(#999, #999) 0 1px / 100% 5px no-repeat,
    repeating-linear-gradient(90deg, #444 0 2px, transparent 2px 6px) 6px 9px / 88px 5px no-repeat;
`;

const SliderKnob = styled.div`
  position: absolute;
  left: 50px;
  top: 2px;
  width: 4px;
  height: 13px;
  box-sizing: border-box;
  background: #ddd;
  border: 1px solid #555;
`;

const StatusBox = styled.div`
  width: 81px;
  height: 17px;
  flex: none;
  box-sizing: border-box;
  border: 1px solid #8c8c8c;
  border-bottom: 0;
  background: #d4d4d4;
  margin-right: 108px;
`;

/* ---------- hand drawn marks over the page ---------- */

const Highlight = styled.svg`
  position: absolute;
  left: 0;
  top: 0;
  mix-blend-mode: multiply;
  pointer-events: none;
`;

const PenStroke = styled.svg`
  position: absolute;
  left: 0;
  top: 0;
  pointer-events: none;
`;

const PinIcon = (
  <svg width="9" height="11" viewBox="0 0 9 11"><path d="M2 1h5v5H2zM0 6h9v1H0zM4 7h1v4H4z" fill="#000" /><path d="M5 2h1v4H5z" fill="#fff" /></svg>
);
const CrossIcon = (
  <svg width="10" height="10" viewBox="0 0 10 10"><path d="M1 1l8 8M9 1L1 9" stroke="#000" strokeWidth="2.400" /></svg>
);

function App() {
  return (
    <Page>
      <GlobalStyle />
      <TitleBar>
        <Icon name="logo" />
        <TitleText>GP-Pro EX - D:₩my_class₩20241021_01.prx</TitleText>
        <WindowButtons>
          <WindowButton $w={28}>
            <svg width="12" height="4"><rect x=".5" y=".5" width="11" height="3" fill="#fff" stroke="#345" /></svg>
          </WindowButton>
          <WindowButton $w={27}>
            <svg width="11" height="10"><path d="M3.500 .5h7v6h-2M.5 3.500h7v6h-7z" fill="none" stroke="#fff" /></svg>
          </WindowButton>
          <WindowButton $w={45}>
            <svg width="11" height="10"><path d="M1 1l9 8M10 1L1 9" stroke="#fff" strokeWidth="2.400" /></svg>
          </WindowButton>
        </WindowButtons>
      </TitleBar>

      <MenuBar>
        {MENU.map((m) => (
          <span key={m}>{m}</span>
        ))}
      </MenuBar>

      <ToolArea>
        <ToolRow>
          <ToolGroup>
            <Grip />
            {MODES.map((m) => (
              <ModeBtn key={m.label} $on={m.on} $mr={m.mr}>
                <Icon name={m.icon} />
                {m.label}
              </ModeBtn>
            ))}
          </ToolGroup>
        </ToolRow>
        <ToolRow>
          <ToolGroup>
            <Grip />
            {renderTools(ROW2A)}
            <ZoomCombo>100%{tinyArrow}</ZoomCombo>
            {renderTools(["tone"])}
          </ToolGroup>
          <ToolGroup>
            <Grip />
            {renderTools(ROW2B)}
          </ToolGroup>
        </ToolRow>
        <ToolRow>
          <ToolGroup>
            <Grip />
            {renderTools(ROW3A)}
          </ToolGroup>
          <ToolGroup>
            <Grip />
            {renderTools(ROW3B)}
          </ToolGroup>
          <ToolGroup>
            <Grip />
            {renderTools(ROW3C)}
          </ToolGroup>
        </ToolRow>
        <ToolRow>
          <ToolGroup>
            <Grip />
            {renderTools(ROW4)}
          </ToolGroup>
        </ToolRow>
      </ToolArea>

      <Workspace>
        <SidePanel>
          <PanelTitle>
            프로젝트 윈도우
            <PanelActions>{PinIcon}{CrossIcon}</PanelActions>
          </PanelTitle>
          <SideTools>
            {renderTools(["~page", "|", "pen", "~puzzle", "~clip", "~del", "|", "~page", "~pagel"])}
          </SideTools>
          <TreeBox>
            <Tree />
            <Scrollbar>
              <ScrollArrow><svg width="7" height="4"><path d="M3.500 0L7 4H0z" fill="#333" /></svg></ScrollArrow>
              <ScrollThumb><ThumbGrip /></ScrollThumb>
            </Scrollbar>
          </TreeBox>
          <DockTabs $pl={5}>
            <DockTab $w={76} $sep><Icon name="addr" />어드레...</DockTab>
            <DockTab $w={49}><Icon name="color" />컬러</DockTab>
            <DockTab $w={78} $on><Icon name="project" />프로젝...</DockTab>
            <DockTab $w={77} $sep><Icon name="scrlist" />화면 리</DockTab>
          </DockTabs>
        </SidePanel>

        <Centre>
          <TabStrip>
            <DocTab $w={158} $on>
              <Icon name="basewin" />
              <DocTabLabel $ml={8} $w={120}>베이스 1(제목 없음)</DocTabLabel>
              <CloseBox>×</CloseBox>
            </DocTab>
            <DocTab $w={92} $pl={4}>
              <Icon name="sys" />
              <DocTabLabel $ml={9} $w={48}>시스템</DocTabLabel>
              <CloseBox>×</CloseBox>
            </DocTab>
            <TabArrows><span>◁</span><span>▷</span></TabArrows>
          </TabStrip>
          <Canvas>
            <SizeHandle $x={88} $y={36} />
            <SizeHandle $x={653} $y={36} />
            <SizeHandle $x={94} $y={556} />
            <SizeHandle $x={654} $y={556} />
            <Screen>
              <WhiteBox />
              <YellowCircle />
              <Keypad $x={45} $y={228} $w={279} $bg="#f4f4f4">
                <MagBadge><Icon name="mag" /></MagBadge>
                <BlueBar />
                <KeyGrid $cols={9} $pad="1px 0 0 0">{KEYS_A.map(keyOf)}</KeyGrid>
                {GRABS.map(([x, y], i) => (
                  <Grabber key={i} $x={x} $y={y} />
                ))}
              </Keypad>
              <Keypad $x={443} $y={213} $w={160} $bg="#d8d8d8">
                <BlueBar />
                <Display>1234567890 1234567</Display>
                <KeyGrid $cols={5} $pad="0 2px">{KEYS_B.map(keyOf)}</KeyGrid>
              </Keypad>
            </Screen>
          </Canvas>
        </Centre>

        <SidePanel>
          <PanelTitle>
            패키지
            <PanelActions>{PinIcon}{CrossIcon}</PanelActions>
          </PanelTitle>
          <DropRow>
            <Dropdown>사용자{tinyArrow}</Dropdown>
          </DropRow>
          <ListWrap>
            <ListBox>
              <Thumb><ThumbInner><ThumbSquare /></ThumbInner></Thumb>
              <Thumb><ThumbInner><ThumbCircle /></ThumbInner></Thumb>
            </ListBox>
          </ListWrap>
          <ButtonRow>
            <PanelButton $w={66}>변경</PanelButton>
            <PanelButton $w={64}>삭제</PanelButton>
            <PanelButton $w={50} $ml={38} $clip>업</PanelButton>
          </ButtonRow>
          <DockTabs>
            <DockTab $w={55} $gap={8}><Icon name="prop" />속...</DockTab>
            <DockTab $w={51} $gap={8}><Icon name="screen" />화...</DockTab>
            <DockTab $w={52} $gap={8}><Icon name="parts" />파...</DockTab>
            <DockTab $w={50} $on $gap={6}><Icon name="pkg" />패...</DockTab>
          </DockTabs>
        </SidePanel>
      </Workspace>

      <ErrorStrip>
        <ErrorTab><Icon name="errchk" />에러 체크</ErrorTab>
      </ErrorStrip>

      <FunctionBar>
        <Grip />
        {FKEYS.map(([k, label, off]) => (
          <FnItem key={k} $off={off}>
            <FnKey $off={off}>{k}</FnKey>
            {label}
          </FnItem>
        ))}
      </FunctionBar>

      <StatusBar>
        <Icon name="okinfo" />
        <StatusText>선택그룹 오브젝트.( 45, 228) - ( 324, 434) [280x207]</StatusText>
        <Slider>
          <ZoomBtn>−</ZoomBtn>
          <SliderTrack><SliderKnob /></SliderTrack>
          <ZoomBtn>+</ZoomBtn>
        </Slider>
        <StatusBox />
        <PanelModel>GP-4501T (Analog Touch Panel)</PanelModel>
      </StatusBar>

      <Highlight width="1915" height="1036" viewBox="0 0 1915 1036">
        <path
          fill="#ffff00"
          d="M990 367 L1100 372 L1175 375 L1223 380 L1290 389 L1340 391 L1690 391 L1723 394 L1767 400 L1785 398 L1737 368 L1737 352 L1794 383 L1794 413 L1720 442 L1703 453 L1702 453 L1702 435 L1750 415 L1713 412 L1556 407 L1350 408 L1223 397 L1150 388 L990 384 Z"
        />
        <path fill="#ffff00" d="M1714 180 L1766 178 L1766 196 L1754 197 L1714 195 Z" />
      </Highlight>
      <PenStroke width="1915" height="1036" viewBox="0 0 1915 1036">
        <path
          fill="none"
          stroke="#0000e6"
          strokeWidth="2"
          d="M880 382 L920 387 L998 391 C1060 397 1120 399 1180 399 C1260 399 1330 397 1400 396 L1745 395 M1730 376 C1745 388 1765 395 1780 404 C1781 410 1770 414 1755 420 L1730 428"
        />
      </PenStroke>
    </Page>
  );
}

export default App;
